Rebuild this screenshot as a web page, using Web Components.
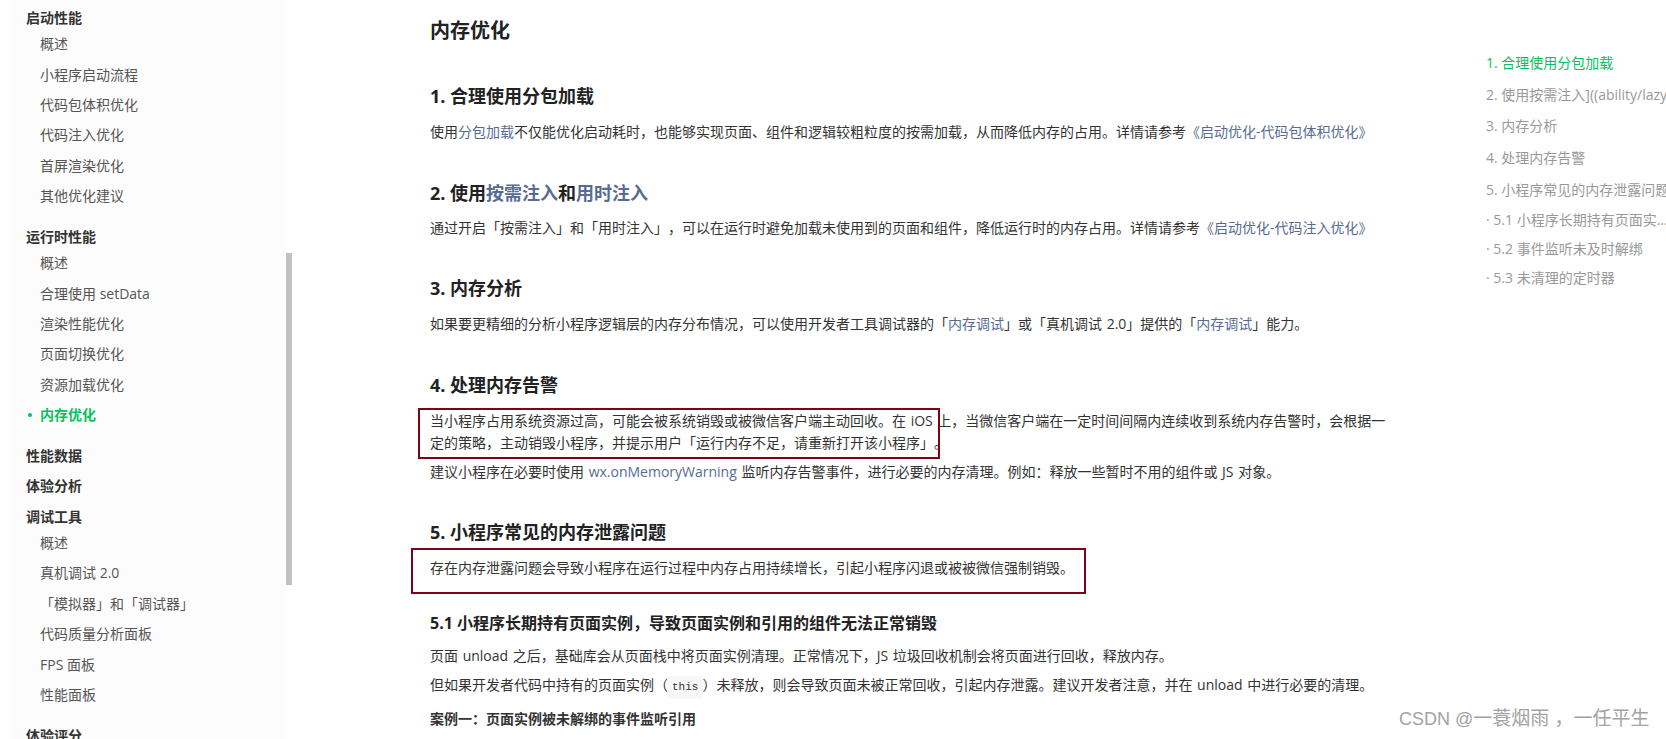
<!DOCTYPE html>
<html lang="zh-CN"><head><meta charset="utf-8"><title>内存优化</title>
<style>
html,body{margin:0;padding:0;height:739px;overflow:hidden;background:#fff}
body{font:14px/22px "Open Sans","Noto Sans CJK SC",sans-serif;color:#333;position:relative;text-spacing-trim:space-all}
</style></head><body>
<doc-page>
  <doc-sidebar slot="side">
    <side-group><span slot="head">启动性能</span><side-item>概述</side-item><side-item>小程序启动流程</side-item><side-item>代码包体积优化</side-item><side-item>代码注入优化</side-item><side-item>首屏渲染优化</side-item><side-item>其他优化建议</side-item></side-group>
    <side-group><span slot="head">运行时性能</span><side-item>概述</side-item><side-item>合理使用 setData</side-item><side-item>渲染性能优化</side-item><side-item>页面切换优化</side-item><side-item>资源加载优化</side-item><side-item active>内存优化</side-item></side-group>
    <side-group bare><span slot="head">性能数据</span></side-group>
    <side-group bare><span slot="head">体验分析</span></side-group>
    <side-group><span slot="head">调试工具</span><side-item>概述</side-item><side-item>真机调试 2.0</side-item><side-item>「模拟器」和「调试器」</side-item><side-item>代码质量分析面板</side-item><side-item>FPS 面板</side-item><side-item>性能面板</side-item></side-group>
    <side-group bare><span slot="head">体验评分</span></side-group>
  </doc-sidebar>
  <doc-article slot="main">
    <doc-title>内存优化</doc-title>
    <doc-h2 style="--mt:38px">1. 合理使用分包加载</doc-h2>
    <doc-p style="--mt:12px">使用<doc-link>分包加载</doc-link>不仅能优化启动耗时，也能够实现页面、组件和逻辑较粗粒度的按需加载，从而降低内存的占用。详情请参考<doc-link>《启动优化-代码包体积优化》</doc-link></doc-p>
    <doc-h2 style="--mt:37px">2. 使用<doc-link>按需注入</doc-link>和<doc-link>用时注入</doc-link></doc-h2>
    <doc-p style="--mt:11px">通过开启「按需注入」和「用时注入」，可以在运行时避免加载未使用到的页面和组件，降低运行时的内存占用。详情请参考<doc-link>《启动优化-代码注入优化》</doc-link></doc-p>
    <doc-h2 style="--mt:36px">3. 内存分析</doc-h2>
    <doc-p style="--mt:12px">如果要更精细的分析小程序逻辑层的内存分布情况，可以使用开发者工具调试器的「<doc-link>内存调试</doc-link>」或「真机调试 2.0」提供的「<doc-link>内存调试</doc-link>」能力。</doc-p>
    <doc-h2 style="--mt:37px">4. 处理内存告警</doc-h2>
    <doc-p style="--mt:12px">当小程序占用系统资源过高，可能会被系统销毁或被微信客户端主动回收。在 iOS 上，当微信客户端在一定时间间隔内连续收到系统内存告警时，会根据一<br>定的策略，主动销毁小程序，并提示用户「运行内存不足，请重新打开该小程序」。</doc-p>
    <doc-p style="--mt:7px">建议小程序在必要时使用 <doc-link>wx.onMemoryWarning</doc-link> 监听内存告警事件，进行必要的内存清理。例如：释放一些暂时不用的组件或 JS 对象。</doc-p>
    <doc-h2 style="--mt:36px">5. 小程序常见的内存泄露问题</doc-h2>
    <doc-p style="--mt:12px">存在内存泄露问题会导致小程序在运行过程中内存占用持续增长，引起小程序闪退或被被微信强制销毁。</doc-p>
    <doc-h3 style="--mt:32px">5.1 小程序长期持有页面实例，导致页面实例和引用的组件无法正常销毁</doc-h3>
    <doc-p style="--mt:10px">页面 unload 之后，基础库会从页面栈中将页面实例清理。正常情况下，JS 垃圾回收机制会将页面进行回收，释放内存。</doc-p>
    <doc-p style="--mt:7px">但如果开发者代码中持有的页面实例（<doc-code>this</doc-code>）未释放，则会导致页面未被正常回收，引起内存泄露。建议开发者注意，并在 unload 中进行必要的清理。</doc-p>
    <doc-p style="--mt:9px"><b>案例一：页面实例被未解绑的事件监听引用</b></doc-p>
  </doc-article>
  <doc-toc slot="toc">
    <toc-item active>1. 合理使用分包加载</toc-item>
    <toc-item>2. 使用按需注入]((ability/lazy-import)和用时注入</toc-item>
    <toc-item>3. 内存分析</toc-item>
    <toc-item>4. 处理内存告警</toc-item>
    <toc-item>5. 小程序常见的内存泄露问题</toc-item>
    <toc-item sub>· 5.1 小程序长期持有页面实...</toc-item>
    <toc-item sub>· 5.2 事件监听未及时解绑</toc-item>
    <toc-item sub>· 5.3 未清理的定时器</toc-item>
  </doc-toc>
</doc-page>
<red-mark style="left:418px;top:408px;width:518px;height:47px"></red-mark>
<red-mark style="left:411px;top:548px;width:671px;height:42px"></red-mark>
<water-mark>CSDN @<span>一蓑烟雨 ，一任平生</span></water-mark>
<script>
function def(name, css, html){
  customElements.define(name, class extends HTMLElement{
    constructor(){super();this.attachShadow({mode:"open"}).innerHTML="<style>"+css+"</style>"+(html||"<slot></slot>");}
  });
}
def("doc-page",":host{display:flex;align-items:flex-start;height:739px;overflow:hidden}",'<slot name="side"></slot><slot name="main"></slot><slot name="toc"></slot>');
def("doc-sidebar",":host{display:block;box-sizing:border-box;width:276px;height:739px;margin-left:10px;padding-left:16px;background:#fcfcfc;position:relative;flex:none}.bar{position:absolute;left:276px;top:253px;width:6px;height:332px;background:#c1c1c1}.in{padding-top:7px}",'<div class="in"><slot></slot></div><div class="bar"></div>');
def("side-group",":host{display:block;margin-bottom:15px}:host([bare]){margin-bottom:8.8px}.h{font-weight:700;font-size:14px;line-height:21.6px;color:#333}",'<div class="h"><slot name="head"></slot></div><slot></slot>');
def("side-item",":host{display:block;box-sizing:border-box;height:30.4px;padding-top:.7px;line-height:29.7px;padding-left:14px;color:#555;font-size:14px;position:relative;white-space:nowrap}:host([active]){color:#07c160;font-weight:700}:host([active])::before{content:'';position:absolute;left:2px;top:14px;width:4px;height:4px;border-radius:50%;background:#07c160}");
def("doc-article",":host{display:block;width:955px;margin-left:144px;padding-top:17px;flex:none}");
def("doc-title",":host{display:block;font-size:20px;line-height:28px;font-weight:700;color:#222}");
def("doc-h2",":host{display:block;margin-top:var(--mt,38px);font-size:18px;line-height:26px;font-weight:700;color:#222}");
def("doc-h3",":host{display:block;margin-top:var(--mt,32px);font-size:16px;line-height:24px;font-weight:700;color:#222}");
def("doc-p",":host{display:block;margin-top:var(--mt,8px);font-size:14px;line-height:22px;color:#333;white-space:nowrap;word-spacing:1px}");
def("doc-link",":host{display:inline;color:#576b95}");
def("doc-code",":host{display:inline-block;font:11px/23px 'Liberation Mono',monospace;background:#f7f7f7;border-radius:4px;padding:0 5px;margin:0 -1px;vertical-align:baseline}");
def("doc-toc",":host{display:block;width:180px;margin-left:101px;padding-top:47px;flex:none;overflow:hidden}");
def("toc-item",":host{display:block;height:31.7px;line-height:31.7px;font-size:14px;color:#999;white-space:nowrap;overflow:hidden}:host([active]){color:#07c160}:host([sub]){height:29px;line-height:29px}");
def("red-mark",":host{display:block;position:absolute;border:2px solid #7f0019}");
def("water-mark",":host{display:block;position:absolute;left:1399px;top:708px;font:18px/22px 'Liberation Sans','Noto Sans CJK SC',sans-serif;color:#a3a3a3;white-space:nowrap}::slotted(span){font-size:19px}");
</script>
</body></html>
